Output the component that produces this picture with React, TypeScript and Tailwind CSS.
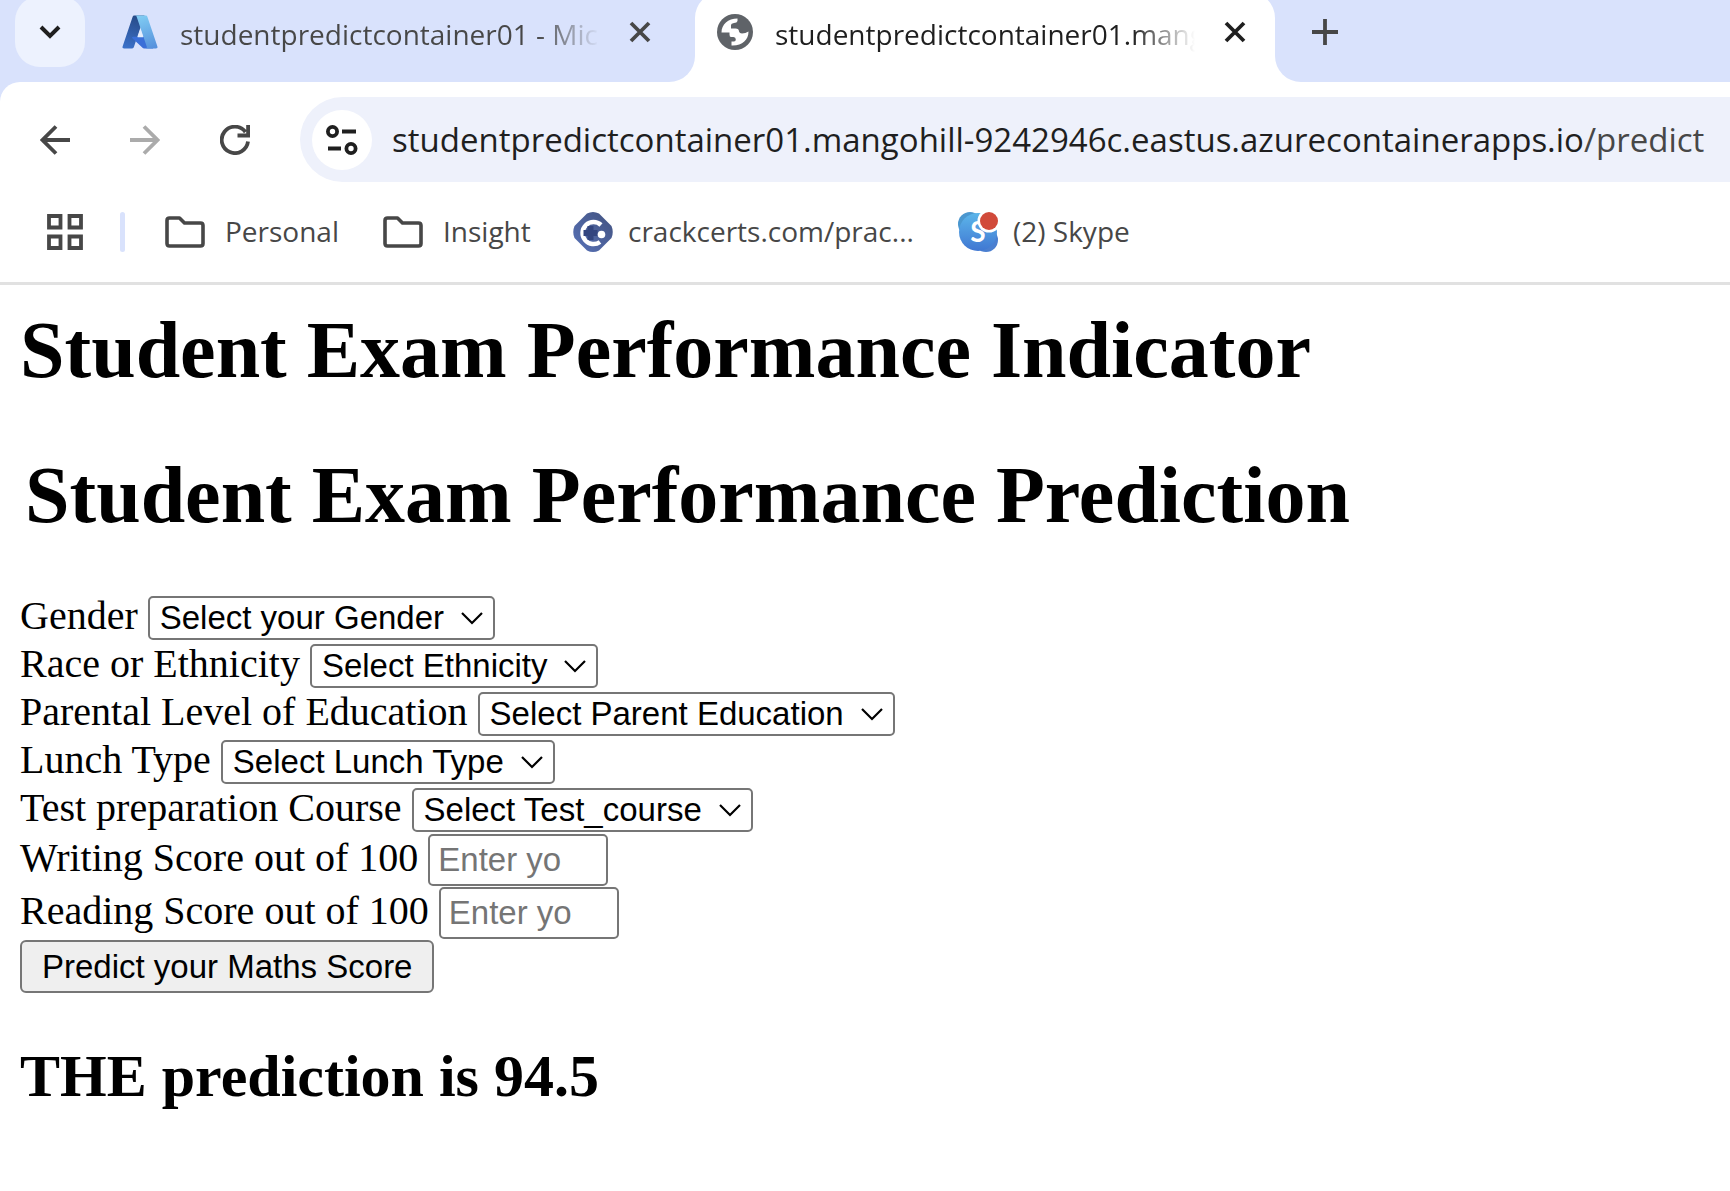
import React, { useId } from 'react';

const UI = "font-['Open_Sans','Noto_Sans',sans-serif]";

function CloseIcon() {
  return (
    <svg width="22" height="22" viewBox="0 0 22 22" fill="none" stroke="currentColor" strokeWidth="3.8" aria-hidden="true">
      <path d="M2 2l18 18M20 2L2 20" />
    </svg>
  );
}

function AzureIcon() {
  return (
    <svg width="38" height="38" viewBox="0 0 96 96" className="shrink-0" aria-hidden="true">
      <defs>
        <linearGradient id="azA" x1="45" y1="7" x2="20" y2="90" gradientUnits="userSpaceOnUse">
          <stop offset="0" stopColor="#264a86" />
          <stop offset="1" stopColor="#3b70c8" />
        </linearGradient>
        <linearGradient id="azB" x1="50" y1="6" x2="80" y2="90" gradientUnits="userSpaceOnUse">
          <stop offset="0" stopColor="#80ccf3" />
          <stop offset="1" stopColor="#5590dc" />
        </linearGradient>
      </defs>
      <path fill="url(#azA)" d="M33.34 6.54h26.04l-27.03 80.1a4.15 4.15 0 0 1-3.94 2.81H8.15a4.14 4.14 0 0 1-3.93-5.47L29.4 9.38a4.15 4.15 0 0 1 3.94-2.83z" />
      <path fill="#3a6fd8" d="M71.17 60.26H29.88a1.91 1.91 0 0 0-1.3 3.31l26.53 24.76a4.17 4.17 0 0 0 2.85 1.13h23.38z" />
      <path fill="url(#azB)" d="M66.6 9.36a4.14 4.14 0 0 0-3.93-2.82H35.65a4.15 4.15 0 0 1 3.93 2.82l25.18 74.62a4.15 4.15 0 0 1-3.93 5.48h27.02a4.15 4.15 0 0 0 3.93-5.48z" />
      <path fill="#e4eefd" d="M49 40l7 21H42z" />
    </svg>
  );
}

function GlobeIcon() {
  return (
    <svg width="36" height="36" viewBox="0 0 36 36" className="shrink-0" aria-hidden="true">
      <circle cx="18" cy="18" r="18" fill="#5f6368" />
      <path
        fill="#fff"
        d="M4.500 18.500C4.500 10.500 11 4.500 20.500 4.500V7Q20 9 17 9Q14 9.300 14 11V14.500H18.500Q22 14.500 22 17.500Q22.500 19.500 25 19.500Q28.500 19.500 31.500 17.500C31.500 26 25 32 14.500 31.500V27.500H17Q18.800 27.500 18.800 25.500Q18.800 23 16.500 23H14Q12.500 23 12.500 20.500V18.500Z"
      />
    </svg>
  );
}

function FolderIcon() {
  return (
    <svg width="40" height="32" viewBox="0 0 40 32" fill="none" stroke="#474747" strokeWidth="3.600" strokeLinejoin="round" aria-hidden="true">
      <path d="M2 4.500Q2 2 4.500 2h10l5 5H35.500Q38 7 38 9.500v18Q38 30 35.500 30h-31Q2 30 2 27.500z" />
    </svg>
  );
}

function CrackcertsIcon() {
  return (
    <svg width="40" height="40" viewBox="0 0 40 40" aria-hidden="true">
      <defs>
        <linearGradient id="cc" x1="0" y1="1" x2="1" y2="0">
          <stop offset="0" stopColor="#5872b8" />
          <stop offset="1" stopColor="#42527f" />
        </linearGradient>
      </defs>
      <path d="M14 1.500Q20-1.500 26 1.500L38.500 14Q41 20 38.500 26L26 38.500Q20 41.500 14 38.500L1.500 26Q-1 20 1.500 14z" fill="url(#cc)" />
      <path d="M28 13A11 11 0 1 0 27 30" fill="none" stroke="#fff" strokeWidth="4.500" />
      <path d="M10.500 18h4v-4h6v4h4v6h-4v4h-6v-4h-4z" fill="#33457f" />
      <circle cx="28.500" cy="22.500" r="3.800" fill="#fff" />
    </svg>
  );
}

function SkypeIcon() {
  return (
    <svg width="40" height="40" viewBox="0 0 40 40" aria-hidden="true">
      <defs>
        <linearGradient id="sk" x1="0" y1="0" x2="0" y2="1">
          <stop offset="0" stopColor="#5cb6ea" />
          <stop offset="1" stopColor="#4077d2" />
        </linearGradient>
      </defs>
      <circle cx="12" cy="12" r="12" fill="#4b97cf" />
      <circle cx="28" cy="28" r="12" fill="#4a7fd0" />
      <circle cx="20" cy="20" r="19" fill="url(#sk)" />
      <text x="20" y="30" textAnchor="middle" fontSize="28" fontWeight="700" fill="#fff" fontFamily="Lato, sans-serif">S</text>
      <circle cx="31" cy="9" r="11.500" fill="#fff" />
      <circle cx="31" cy="9" r="9" fill="#d14a3a" />
    </svg>
  );
}

function TabStrip() {
  return (
    <div className="flex h-[82px] items-start overflow-hidden bg-[#d9e2fc] pl-[15px]">
      <button aria-label="Search tabs" className="-mt-1 flex h-[71px] w-[70px] shrink-0 items-center justify-center rounded-[25px] bg-[#edf2fe] text-[#1f1f1f]">
        <svg width="22" height="16" viewBox="0 0 22 16" fill="none" stroke="currentColor" strokeWidth="4" aria-hidden="true">
          <path d="M2 3l9 9 9-9" />
        </svg>
      </button>
      <div className="ml-9 flex h-16 w-[574px] shrink-0 items-center text-[#474747]">
        <AzureIcon />
        <span className="ml-[21px] w-[420px] overflow-hidden bg-linear-to-r from-[#474747] from-85% to-transparent bg-clip-text pt-1 text-[28px] leading-10 whitespace-nowrap text-transparent">
          studentpredictcontainer01 - Microsoft Azure
        </span>
        <button aria-label="Close tab" className="ml-[29px]"><CloseIcon /></button>
      </div>
      <div className="relative -mt-2 flex h-[90px] w-[580px] shrink-0 items-start rounded-t-[26px] bg-white pt-2 pl-[22px] text-[#1f1f1f]">
        <div className="absolute right-full bottom-0 size-[26px] bg-white"><div className="size-full rounded-br-[26px] bg-[#d9e2fc]" /></div>
        <div className="absolute bottom-0 left-full size-[26px] bg-white"><div className="size-full rounded-bl-[26px] bg-[#d9e2fc]" /></div>
        <div className="flex h-16 items-center">
          <GlobeIcon />
          <span className="ml-[22px] w-[420px] overflow-hidden bg-linear-to-r from-[#1f1f1f] from-85% to-transparent bg-clip-text pt-1 text-[28px] leading-10 whitespace-nowrap text-transparent">
            studentpredictcontainer01.mangohill-9242946c
          </span>
          <button aria-label="Close tab" className="ml-[29px]"><CloseIcon /></button>
        </div>
      </div>
      <button aria-label="New tab" className="ml-9 flex h-16 items-center text-[#474747]">
        <svg width="28" height="28" viewBox="0 0 28 28" fill="none" stroke="currentColor" strokeWidth="3.800" aria-hidden="true">
          <path d="M14 1v26M1 14h26" />
        </svg>
      </button>
    </div>
  );
}

function Toolbar() {
  return (
    <div className="bg-[#d9e2fc]">
      <div className="flex items-center rounded-tl-[20px] bg-white pt-[15px] pl-10">
        <button aria-label="Back" className="text-[#474747]">
          <svg width="30" height="30" viewBox="0 0 30 30" fill="none" stroke="currentColor" strokeWidth="3.800" aria-hidden="true">
            <path d="M30 15H3M16 1.500L2.500 15 16 28.500" />
          </svg>
        </button>
        <button aria-label="Forward" disabled className="ml-[60px] text-[#ababab]">
          <svg width="30" height="30" viewBox="0 0 30 30" fill="none" stroke="currentColor" strokeWidth="3.800" aria-hidden="true">
            <path d="M0 15h27M14 1.500L27.500 15 14 28.500" />
          </svg>
        </button>
        <button aria-label="Reload" className="ml-[60px] text-[#474747]">
          <svg width="30" height="30" viewBox="0 0 30 30" fill="none" stroke="currentColor" strokeWidth="3.800" aria-hidden="true">
            <path d="M28 16.500A13.200 13.200 0 1 1 25.500 7M28.100 0v10.500H17.500" />
          </svg>
        </button>
        <div className="ml-[50px] flex h-[85px] min-w-0 flex-1 items-center rounded-l-full bg-[#eef1fb] pl-3">
          <button aria-label="View site information" className="flex size-[60px] shrink-0 items-center justify-center rounded-full bg-white text-[#1f1f1f]">
            <svg width="32" height="30" viewBox="0 0 32 30" fill="none" stroke="currentColor" strokeWidth="3.800" aria-hidden="true">
              <circle cx="6.500" cy="6.500" r="4.600" />
              <path d="M16 6.500h14M2 23.500h13" />
              <circle cx="25" cy="23.500" r="4.600" />
            </svg>
          </button>
          <a href="#" className="ml-5 text-[33px] leading-[48px] whitespace-nowrap text-[#1f1f1f]">
            studentpredictcontainer01.mangohill-9242946c.eastus.azurecontainerapps.io<span className="text-[#474747]">/predict</span>
          </a>
        </div>
      </div>
    </div>
  );
}

function Bookmark({ icon, text, className }: { icon: React.ReactNode; text: string; className: string }) {
  return (
    <a href="#" className={`flex items-center ${className}`}>
      {icon}
      <span className="pb-0.5">{text}</span>
    </a>
  );
}

function Bookmarks() {
  return (
    <nav className="flex h-[103px] items-center border-b-[3px] border-[#e1e1e1] bg-white pl-[47px] text-[28px] leading-10 text-[#474747]">
      <button aria-label="Apps">
        <svg width="36" height="36" viewBox="0 0 36 36" fill="none" stroke="currentColor" strokeWidth="3.800" aria-hidden="true">
          <path d="M2 2h11.500v11.500H2zM22.500 2H34v11.500H22.500zM2 22.500h11.500V34H2zM22.500 22.500H34V34H22.500z" />
        </svg>
      </button>
      <div className="ml-[37px] h-10 w-[5px] rounded-full bg-[#d9e2fc]" />
      <Bookmark className="ml-10 w-[218px] gap-5" icon={<FolderIcon />} text="Personal" />
      <Bookmark className="w-[190px] gap-5" icon={<FolderIcon />} text="Insight" />
      <Bookmark className="w-[385px] gap-[15px]" icon={<CrackcertsIcon />} text="crackcerts.com/prac..." />
      <Bookmark className="gap-[15px]" icon={<SkypeIcon />} text="(2) Skype" />
    </nav>
  );
}

function SelectRow({ label, placeholder }: { label: string; placeholder: string }) {
  const id = useId();
  return (
    <div className="flex h-12 items-baseline gap-[10px]">
      <label htmlFor={id} className="leading-[44px]">{label}</label>
      <div className="relative flex">
        <select id={id} className="h-11 appearance-none rounded-[5px] border-2 border-[#767676] bg-white pr-12 pl-[10px] font-['Liberation_Sans',Arial,sans-serif] text-[33px] leading-10">
          <option>{placeholder}</option>
        </select>
        <svg width="22" height="14" viewBox="0 0 22 14" fill="none" stroke="#000" strokeWidth="2.200" className="pointer-events-none absolute top-4 right-3" aria-hidden="true">
          <path d="M1 1l10 10 10-10" />
        </svg>
      </div>
    </div>
  );
}

function ScoreRow({ label }: { label: string }) {
  const id = useId();
  return (
    <div className="flex h-[53px] items-baseline gap-[10px]">
      <label htmlFor={id} className="leading-[44px]">{label}</label>
      <div className="flex h-[52px] w-[180px] rounded-[5px] border-2 border-[#767676] bg-white pr-11 pl-2">
        <input id={id} type="text" placeholder="Enter your score" className="w-full min-w-0 font-['Liberation_Sans',Arial,sans-serif] text-[33px] leading-[48px] outline-none placeholder:text-[#757575]" />
      </div>
    </div>
  );
}

export default function App() {
  return (
    <div className="min-h-screen overflow-x-hidden bg-white">
      <header className={UI}>
        <TabStrip />
        <Toolbar />
        <Bookmarks />
      </header>
      <main className="px-5 pt-[19px] pb-5 font-['Liberation_Serif','Times_New_Roman',serif] text-[40px] text-black">
        <h1 className="text-[80px] leading-[92px] font-bold">Student Exam Performance Indicator</h1>
        <h1 className="mt-[53px] pl-[5px] text-[80px] leading-[92px] font-bold">Student Exam Performance Prediction</h1>
        <form className="mt-[53px]" onSubmit={(e) => e.preventDefault()}>
          <SelectRow label="Gender" placeholder="Select your Gender" />
          <SelectRow label="Race or Ethnicity" placeholder="Select Ethnicity" />
          <SelectRow label="Parental Level of Education" placeholder="Select Parent Education" />
          <SelectRow label="Lunch Type" placeholder="Select Lunch Type" />
          <SelectRow label="Test preparation Course" placeholder="Select Test_course" />
          <ScoreRow label="Writing Score out of 100" />
          <ScoreRow label="Reading Score out of 100" />
          <button type="submit" className="block h-[53px] rounded-[6px] border-2 border-[#767676] bg-[#efefef] px-5 font-['Liberation_Sans',Arial,sans-serif] text-[33px] leading-[48px]">
            Predict your Maths Score
          </button>
        </form>
        <h2 className="mt-[49px] text-[60px] leading-[68px] font-bold">THE prediction is 94.5</h2>
      </main>
    </div>
  );
}
